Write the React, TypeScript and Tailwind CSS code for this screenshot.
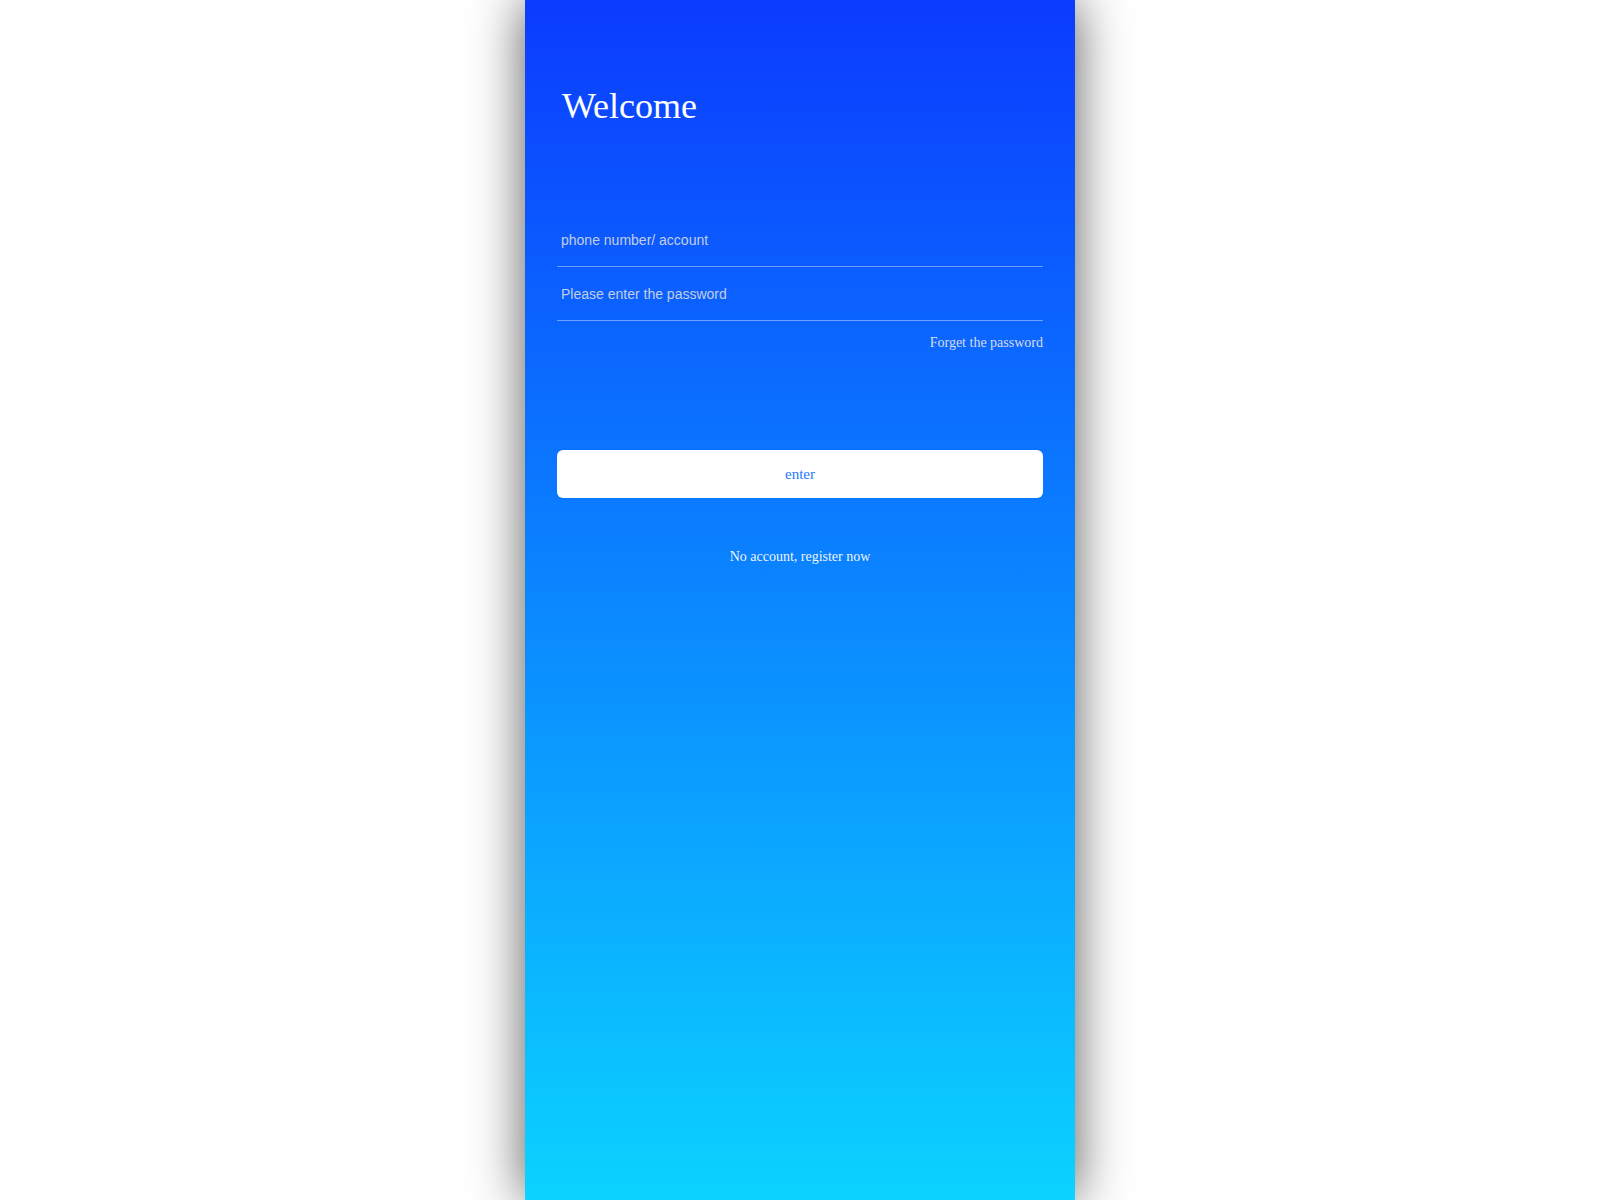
export default function App() {
  return (
    <div className="min-h-screen w-full bg-white">
      <main className="mx-auto flex h-screen w-[550px] flex-col bg-[linear-gradient(to_bottom,#0b3bff,#0bd3ff)] px-8 shadow-[0_0_50px_rgba(0,0,0,0.65)] [font-family:'Liberation_Serif','Times_New_Roman',serif]">
        <h1 className="mt-[88px] pl-[5px] text-[36px] leading-[36px] font-normal text-white">
          Welcome
        </h1>

        <form className="mt-[89px] flex flex-col" onSubmit={(e) => e.preventDefault()}>
          <input
            type="text"
            placeholder="phone number/ account"
            className="h-[53px] box-content border-b border-white/40 bg-transparent px-[4px] text-[14px] text-white outline-none placeholder:text-[#c3cde6] [font-family:'Liberation_Sans',Arial,sans-serif]"
          />
          <input
            type="password"
            placeholder="Please enter the password"
            className="h-[53px] box-content border-b border-white/40 bg-transparent px-[4px] text-[14px] text-white outline-none placeholder:text-[#c3cde6] [font-family:'Liberation_Sans',Arial,sans-serif]"
          />
          <div className="mt-[12px] flex justify-end">
            <a href="#" className="text-[14px] leading-[20px] text-[#d6dcee]">
              Forget the password
            </a>
          </div>

          <button
            type="submit"
            className="mt-[97px] h-[48px] rounded-[6px] bg-white text-[15px] text-[#1f78ff]"
          >
            enter
          </button>
        </form>

        <p className="mt-[49px] text-center text-[14px] leading-[20px] text-white/95">
          No account, register now
        </p>
      </main>
    </div>
  );
}
